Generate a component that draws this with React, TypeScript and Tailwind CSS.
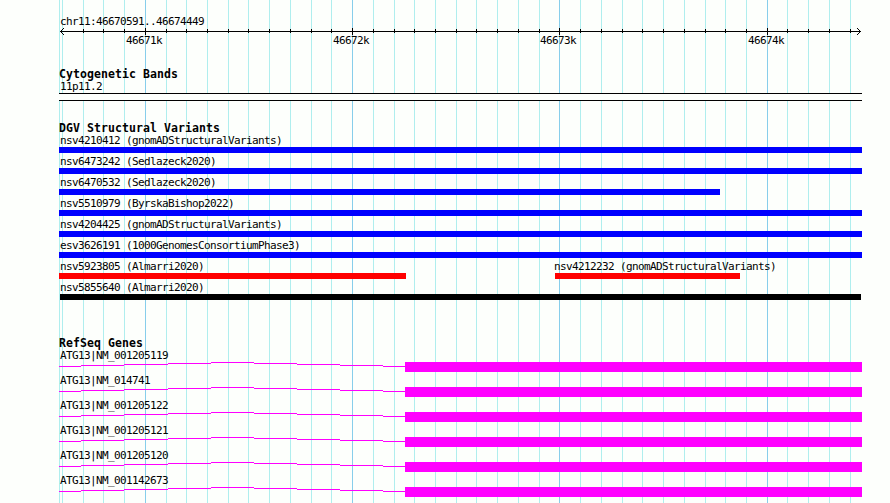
type Feature = { name: string; start: number; width: number; color: string; shift?: string };

const LEFT = 59;
const RIGHT = 862;

const minorTicks = [
  62, 83, 103, 124, 166, 186, 207, 228, 248, 269, 290, 311, 331, 373, 394, 414, 435, 456, 476, 497,
  518, 539, 580, 601, 622, 642, 663, 684, 705, 725, 746, 787, 808, 829, 850,
];

const majorTicks = [
  { x: 145, label: "46671k" },
  { x: 352, label: "46672k" },
  { x: 559, label: "46673k" },
  { x: 767, label: "46674k" },
];

// start is the distance to the end of the previous feature in the row
const variants: Feature[][] = [
  [{ name: "nsv4210412 (gnomADStructuralVariants)", start: 0, width: 803, color: "bg-[#0000ff]" }],
  [{ name: "nsv6473242 (Sedlazeck2020)", start: 0, width: 803, color: "bg-[#0000ff]" }],
  [{ name: "nsv6470532 (Sedlazeck2020)", start: 0, width: 661, color: "bg-[#0000ff]" }],
  [{ name: "nsv5510979 (ByrskaBishop2022)", start: 0, width: 803, color: "bg-[#0000ff]" }],
  [{ name: "nsv4204425 (gnomADStructuralVariants)", start: 0, width: 803, color: "bg-[#0000ff]" }],
  [{ name: "esv3626191 (1000GenomesConsortiumPhase3)", start: 0, width: 803, color: "bg-[#0000ff]" }],
  [
    { name: "nsv5923805 (Almarri2020)", start: 0, width: 347, color: "bg-[#ff0000]" },
    { name: "nsv4212232 (gnomADStructuralVariants)", start: 149, width: 185, color: "bg-[#ff0000]", shift: "-ml-0.5" },
  ],
  [{ name: "nsv5855640 (Almarri2020)", start: 1, width: 801, color: "bg-black", shift: "-ml-px" }],
];

const genes = [
  "ATG13|NM_001205119",
  "ATG13|NM_014741",
  "ATG13|NM_001205122",
  "ATG13|NM_001205121",
  "ATG13|NM_001205120",
  "ATG13|NM_001142673",
];

// x, y, width of each step of the intron line, relative to the glyph
const intronSteps = [
  [0, 4, 22],
  [22, 3, 43],
  [65, 2, 44],
  [109, 1, 43],
  [152, 0, 43],
  [195, 1, 43],
  [238, 2, 43],
  [281, 3, 43],
  [324, 4, 22],
];

function GridLines() {
  return (
    <svg className="absolute inset-0" width="890" height="503" shapeRendering="crispEdges">
      {[LEFT, ...minorTicks].map((x) => (
        <rect key={x} x={x} y={0} width={1} height={503} fill="#afeeee" />
      ))}
      {majorTicks.map(({ x }) => (
        <rect key={x} x={x} y={0} width={1} height={503} fill="#87ceeb" />
      ))}
    </svg>
  );
}

function Ruler() {
  return (
    <svg className="block -ml-[59px]" width="890" height="20" shapeRendering="crispEdges">
      <rect x={60} y={4} width={801} height={1} />
      {minorTicks.slice(1).map((x) => (
        <rect key={x} x={x} y={2} width={1} height={4} />
      ))}
      {majorTicks.map(({ x, label }) => (
        <g key={x}>
          <rect x={x} y={1} width={1} height={7} />
          <text x={x - 19} y={17} className="text-[11px] tracking-[-0.622px]">
            {label}
          </text>
        </g>
      ))}
      {[1, 2, 3].map((d) => (
        <g key={d}>
          <rect x={60 + d} y={4 - d} width={1} height={1} />
          <rect x={60 + d} y={4 + d} width={1} height={1} />
          <rect x={860 - d} y={4 - d} width={1} height={1} />
          <rect x={860 - d} y={4 + d} width={1} height={1} />
        </g>
      ))}
    </svg>
  );
}

function TrackTitle({ children }: { children: string }) {
  return (
    <h2 className="h-3 text-[11.5px] leading-[17px] font-bold tracking-[0.077px] whitespace-pre">{children}</h2>
  );
}

function Label({ children }: { children: string }) {
  return (
    <p className="h-[15px] pl-px text-[11px] leading-[17px] tracking-[-0.622px] whitespace-nowrap">{children}</p>
  );
}

export default function App() {
  return (
    <div className="relative h-[503px] w-[890px] overflow-hidden bg-[#fdfffc] font-['DejaVu_Sans_Mono',monospace] text-black">
      <GridLines />
      <main className="relative pl-[59px] pt-[13px]" style={{ width: RIGHT }}>
        <div className="h-[14px]">
          <Label>chr11:46670591..46674449</Label>
        </div>
        <Ruler />

        <section className="pt-[19px]">
          <TrackTitle>Cytogenetic Bands</TrackTitle>
          <Label>11p11.2</Label>
          <div className="h-2 border-y border-black bg-[#fdfffc]" />
        </section>

        <section className="pt-[19px]">
          <TrackTitle>DGV Structural Variants</TrackTitle>
          {variants.map((row, i) => (
            <div key={i} className="flex h-[21px]">
              {row.map((f) => (
                <div key={f.name} className="shrink-0" style={{ marginLeft: f.start, width: f.width }}>
                  <div className={f.shift}>
                    <Label>{f.name}</Label>
                  </div>
                  <div className={`h-1.5 ${f.color}`} />
                </div>
              ))}
            </div>
          ))}
        </section>

        <section className="pt-[35px]">
          <TrackTitle>RefSeq Genes</TrackTitle>
          {genes.map((gene) => (
            <div key={gene} className="h-[25px]">
              <Label>{gene}</Label>
              <div className="flex h-2.5">
                <svg width="346" height="10" shapeRendering="crispEdges" fill="#ff00ff">
                  {intronSteps.map(([x, y, w]) => (
                    <rect key={x} x={x} y={y} width={w} height={1} />
                  ))}
                </svg>
                <div className="flex-1 bg-[#ff00ff]" />
              </div>
            </div>
          ))}
        </section>
      </main>
    </div>
  );
}
